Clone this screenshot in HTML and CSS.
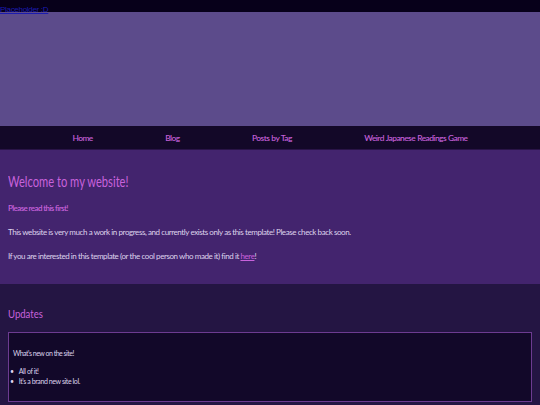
FILE: index.html
```html
<!DOCTYPE html>
<html>
<head>
<meta charset="utf-8">
<link rel="stylesheet" href="styles.css">
</head>
<body>
<div class="topbar"><a href="#" class="toplink">Placeholder :D</a></div>
<div class="banner"></div>
<nav class="nav">
  <a href="#">Home</a>
  <a href="#">Blog</a>
  <a href="#">Posts by Tag</a>
  <a href="#">Weird Japanese Readings Game</a>
</nav>
<section class="welcome">
  <h1 class="title"><span class="narrow">Welcome to my website!</span></h1>
  <p class="notice">Please read this first!</p>
  <p class="text">This website is very much a work in progress, and currently exists only as this template! Please check back soon.</p>
  <p class="text">If you are interested in this template (or the cool person who made it) find it <a href="#" class="inline">here</a>!</p>
</section>
<section class="updates">
  <h2 class="subtitle"><span class="narrow">Updates</span></h2>
  <div class="box">
    <p class="text small">What's new on the site!</p>
    <ul class="list">
      <li>All of it!</li>
      <li>It's a brand new site lol.</li>
    </ul>
  </div>
</section>
</body>
</html>
```
FILE: styles.css
```css
html, body { margin: 0; padding: 0; }
body {
  background: #241543;
  font-family: Lato, "Noto Sans", sans-serif;
  width: 540px;
  height: 405px;
  overflow: hidden;
}
.topbar {
  height: 12px;
  background: #07001a;
  line-height: 11px;
}
.toplink {
  font-family: "Liberation Sans", sans-serif;
  font-size: 8px;
  letter-spacing: -0.3px;
  color: #1c1cb0;
}
.banner {
  height: 114px;
  background: #5c4b8b;
}
.nav {
  height: 24px;
  background: #130828;
  display: flex;
  justify-content: space-evenly;
  align-items: center;
  border-bottom: 1px solid #2a1448;
  box-sizing: border-box;
}
.nav a {
  color: #c25fd6;
  text-decoration: none;
  font-size: 8.4px;
  font-weight: 600;
  letter-spacing: -0.55px;
  word-spacing: 0.5px;
}
.welcome {
  background: #43246e;
  height: 134px;
  padding: 1px 8px 0;
  box-sizing: border-box;
}
.narrow {
  display: inline-block;
  transform-origin: left center;
}
.title {
  color: #c862dc;
  font-size: 14.5px;
  font-weight: 400;
  margin: 22px 0 0;
  line-height: 18px;
}
.title .narrow { transform: scaleX(0.77); }
.notice {
  color: #c862dc;
  font-size: 8px;
  font-weight: 600;
  letter-spacing: -0.6px;
  margin: 12px 0 0;
  line-height: 10px;
}
.text {
  color: #ddd3ec;
  font-size: 8px;
  line-height: 10px;
  letter-spacing: -0.42px;
  margin: 14px 0 0;
}
.welcome .text + .text { margin-top: 14px; }
.inline { color: #c862dc; }
.updates {
  padding: 1px 8px 0;
}
.subtitle {
  color: #c862dc;
  font-size: 11px;
  font-weight: 400;
  margin: 22px 0 0;
  line-height: 14px;
}
.subtitle .narrow { transform: scaleX(0.87); }
.box {
  margin-top: 11px;
  height: 70px;
  box-sizing: border-box;
  background: #120829;
  border: 1px solid #6d3b91;
  padding: 1px 4px 0;
}
.box .small { margin-top: 14px; font-size: 7px; letter-spacing: -0.5px; }
.list {
  list-style: none;
  margin: 8px 0 0 -3px;
  padding-left: 0;
  color: #ddd3ec;
  font-size: 7px;
  line-height: 10px;
  letter-spacing: -0.4px;
}
.list li::before {
  content: "\2022";
  margin-right: 5px;
}
```
